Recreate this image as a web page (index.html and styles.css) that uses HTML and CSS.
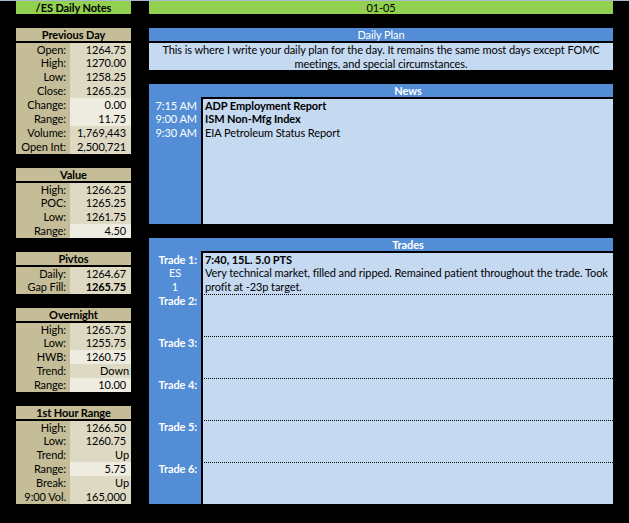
FILE: index.html
```html
<!DOCTYPE html>
<html>
<head>
<meta charset="utf-8">
<title>/ES Daily Notes</title>
<link rel="stylesheet" href="styles.css">
</head>
<body>
<div class="sheet">
  <div class="left">
    <div class="title bold">/ES Daily Notes</div>

    <section class="box">
      <div class="box-head">Previous Day</div>
      <div class="rows">
        <div class="row"><span class="lbl">Open:</span><span class="val">1264.75</span></div>
        <div class="row"><span class="lbl">High:</span><span class="val">1270.00</span></div>
        <div class="row"><span class="lbl">Low:</span><span class="val">1258.25</span></div>
        <div class="row"><span class="lbl">Close:</span><span class="val">1265.25</span></div>
        <div class="row"><span class="lbl">Change:</span><span class="val hi">0.00</span></div>
        <div class="row"><span class="lbl">Range:</span><span class="val hi">11.75</span></div>
        <div class="row"><span class="lbl">Volume:</span><span class="val">1,769,443</span></div>
        <div class="row"><span class="lbl">Open Int:</span><span class="val">2,500,721</span></div>
      </div>
    </section>

    <section class="box">
      <div class="box-head">Value</div>
      <div class="rows">
        <div class="row"><span class="lbl">High:</span><span class="val">1266.25</span></div>
        <div class="row"><span class="lbl">POC:</span><span class="val">1265.25</span></div>
        <div class="row"><span class="lbl">Low:</span><span class="val">1261.75</span></div>
        <div class="row"><span class="lbl">Range:</span><span class="val hi">4.50</span></div>
      </div>
    </section>

    <section class="box">
      <div class="box-head">Pivtos</div>
      <div class="rows">
        <div class="row"><span class="lbl">Daily:</span><span class="val">1264.67</span></div>
        <div class="row"><span class="lbl">Gap Fill:</span><span class="val bold">1265.75</span></div>
      </div>
    </section>

    <section class="box">
      <div class="box-head">Overnight</div>
      <div class="rows">
        <div class="row"><span class="lbl">High:</span><span class="val">1265.75</span></div>
        <div class="row"><span class="lbl">Low:</span><span class="val">1255.75</span></div>
        <div class="row"><span class="lbl">HWB:</span><span class="val hi">1260.75</span></div>
        <div class="row"><span class="lbl">Trend:</span><span class="val txt">Down</span></div>
        <div class="row"><span class="lbl">Range:</span><span class="val hi">10.00</span></div>
      </div>
    </section>

    <section class="box">
      <div class="box-head">1st Hour Range</div>
      <div class="rows">
        <div class="row"><span class="lbl">High:</span><span class="val">1266.50</span></div>
        <div class="row"><span class="lbl">Low:</span><span class="val">1260.75</span></div>
        <div class="row"><span class="lbl">Trend:</span><span class="val txt">Up</span></div>
        <div class="row"><span class="lbl">Range:</span><span class="val hi">5.75</span></div>
        <div class="row"><span class="lbl">Break:</span><span class="val txt">Up</span></div>
        <div class="row"><span class="lbl">9:00 Vol.</span><span class="val">165,000</span></div>
      </div>
    </section>
  </div>

  <div class="right">
    <div class="title">01-05</div>

    <section class="plan">
      <div class="blue-head">Daily Plan</div>
      <div class="plan-body">This is where I write your daily plan for the day. It remains the same most days except FOMC meetings, and special circumstances.</div>
    </section>

    <section class="panel news">
      <div class="panel-head"><span class="side"></span><span class="head-text bold">News</span></div>
      <div class="panel-body">
        <div class="side times">
          <div class="line">7:15 AM</div>
          <div class="line">9:00 AM</div>
          <div class="line">9:30 AM</div>
        </div>
        <div class="main items">
          <div class="line bold">ADP Employment Report</div>
          <div class="line bold">ISM Non-Mfg Index</div>
          <div class="line">EIA Petroleum Status Report</div>
        </div>
      </div>
    </section>

    <section class="panel trades">
      <div class="panel-head"><span class="side"></span><span class="head-text bold">Trades</span></div>
      <div class="trade-list">
        <div class="trade">
          <div class="side tlabel">
            <div class="line bold">Trade 1:</div>
            <div class="line center">ES</div>
            <div class="line center">1</div>
          </div>
          <div class="main">
            <div class="line bold">7:40, 15L. 5.0 PTS</div>
            <div class="line">Very technical market, filled and ripped. Remained patient throughout the trade. Took</div>
            <div class="line">profit at -23p target.</div>
          </div>
        </div>
        <div class="trade">
          <div class="side tlabel"><div class="line bold">Trade 2:</div></div>
          <div class="main"></div>
        </div>
        <div class="trade">
          <div class="side tlabel"><div class="line bold">Trade 3:</div></div>
          <div class="main"></div>
        </div>
        <div class="trade">
          <div class="side tlabel"><div class="line bold">Trade 4:</div></div>
          <div class="main"></div>
        </div>
        <div class="trade">
          <div class="side tlabel"><div class="line bold">Trade 5:</div></div>
          <div class="main"></div>
        </div>
        <div class="trade">
          <div class="side tlabel"><div class="line bold">Trade 6:</div></div>
          <div class="main"></div>
        </div>
      </div>
    </section>
  </div>
</div>
</body>
</html>
```

FILE: styles.css
```css
html, body {
  margin: 0;
  padding: 0;
  background: #000;
}

body {
  width: 629px;
  height: 523px;
  overflow: hidden;
  font-family: Lato, "Liberation Sans", sans-serif;
  font-size: 11px;
  letter-spacing: -0.08px;
  color: #000;
}

.bold { font-weight: 700; }

.sheet {
  display: flex;
  gap: 18px;
  padding-left: 16px;
  border-top: 1px solid #a9b8cc;
}

.left {
  width: 115px;
  display: flex;
  flex-direction: column;
}

.right {
  width: 464px;
  display: flex;
  flex-direction: column;
}

.title {
  height: 13px;
  line-height: 13px;
  background: #92d050;
  text-align: center;
}

/* Left stat boxes */
.box {
  margin-top: 14px;
}

.box-head {
  height: 13px;
  line-height: 13px;
  background: #c4bd97;
  border-bottom: 2px solid #000;
  text-align: center;
  font-weight: 700;
}

.row {
  display: grid;
  grid-template-columns: 54px 61px;
  height: 14px;
  line-height: 14px;
}

.row:first-child {
  height: 13px;
  line-height: 13px;
}

.lbl {
  background: #c4bd97;
  text-align: right;
  padding-right: 4px;
  white-space: nowrap;
}

.val {
  background: #ddd9c3;
  text-align: right;
  padding-right: 5px;
  white-space: nowrap;
}

.val.hi { background: #eeece1; }
.val.txt { padding-right: 2px; }

/* Daily plan */
.plan {
  margin-top: 14px;
}

.blue-head {
  height: 13px;
  line-height: 13px;
  background: #538dd5;
  color: #fff;
  text-align: center;
  border-bottom: 2px solid #000;
}

.plan-body {
  height: 27px;
  background: #c5d9f1;
  text-align: center;
  line-height: 14px;
}

/* Panels (News, Trades) */
.panel {
  margin-top: 14px;
  background: #538dd5;
  display: flex;
  flex-direction: column;
}

.panel-head {
  display: flex;
  height: 13px;
  line-height: 13px;
  color: #fff;
}

.head-text {
  flex: 1;
  text-align: center;
  padding-left: 2px;
}

.side {
  width: 52px;
  flex: none;
  color: #fff;
}

.main {
  flex: 1;
  background: #c5d9f1;
  border-left: 2px solid #000;
  padding-left: 2px;
}

.line {
  height: 14px;
  line-height: 14px;
  white-space: nowrap;
}

.news { height: 140px; }

.panel-body {
  flex: 1;
  display: flex;
}

.times {
  padding-top: 2px;
  text-align: right;
  padding-right: 4px;
  box-sizing: border-box;
}

.times .line:first-child,
.items .line:first-child {
  height: 13px;
  line-height: 13px;
}

.items {
  border-top: 2px solid #000;
}

.trades { height: 266px; }

.trade-list {
  flex: 1;
  display: flex;
  flex-direction: column;
}

.trade {
  display: flex;
  flex: none;
  height: 42px;
}

.trade:first-child {
  height: 43px;
}

.trade:first-child .main {
  border-top: 2px solid #000;
}

.trade + .trade .main {
  border-top: 1px dotted #000;
}

.trade:first-child .line:first-child {
  height: 13px;
  line-height: 13px;
}

.trade:first-child .tlabel {
  padding-top: 2px;
}

.tlabel {
  text-align: right;
  padding-right: 4px;
  box-sizing: border-box;
}

.tlabel .center {
  text-align: center;
  padding-left: 4px;
}
```
